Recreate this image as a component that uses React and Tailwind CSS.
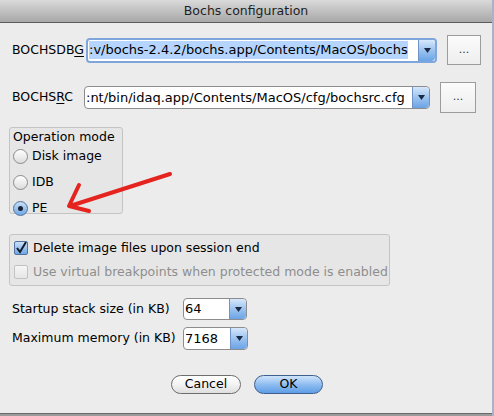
import React from 'react';

const font = { fontFamily: '"Lucida Grande", "DejaVu Sans", sans-serif' };

const Arrow = () => (
  <div className="flex h-full w-[17px] shrink-0 items-center justify-center rounded-r-[4px] border-l border-[#6f93c6] bg-gradient-to-b from-[#d6e7fb] via-[#9cc3ef] to-[#6aa3e6]">
    <svg width="7" height="5" viewBox="0 0 7 5">
      <path d="M0 0 L7 0 L3.5 5 Z" fill="#1b2a44" />
    </svg>
  </div>
);

const Combo = ({ text, width, height, focused, selected }) => (
  <div
    className={`flex shrink-0 items-stretch rounded-[4px] bg-white ${
      focused ? 'border-2 border-[#7ea6dc]' : 'border border-[#8d8d8d]'
    }`}
    style={{ width, height }}
  >
    <div className="flex flex-1 items-center overflow-hidden pl-[1px]">
      <span
        className={`whitespace-nowrap text-[13px] leading-[18px] text-black ${selected ? 'bg-[#b5d5fe]' : ''}`}
      >
        {text}
      </span>
    </div>
    <Arrow />
  </div>
);

const DotsButton = ({ width, height }) => (
  <div
    className="flex shrink-0 items-center justify-center border border-[#9c9c9c] bg-gradient-to-b from-[#fbfbfb] to-[#eeeeee] text-[11px] text-[#333]"
    style={{ width, height }}
  >
    ...
  </div>
);

const Radio = ({ label, checked }) => (
  <div className="flex h-[26px] items-center gap-[4px] pl-[3px]">
    {checked ? (
      <div className="flex h-[15px] w-[15px] items-center justify-center rounded-full border border-[#51729f] bg-gradient-to-b from-[#c9e0f8] to-[#6ea7e4]">
        <div className="h-[5px] w-[5px] rounded-full bg-[#1b2331]" />
      </div>
    ) : (
      <div className="h-[15px] w-[15px] rounded-full border border-[#8b8b8b] bg-gradient-to-b from-[#ffffff] to-[#dcdcdc]" />
    )}
    <span className="text-[12.5px] text-black">{label}</span>
  </div>
);

export default function App() {
  return (
    <div className="relative flex h-[416px] w-[494px] overflow-hidden bg-[#ececec]" style={font}>
      <div className="flex w-[492px] flex-col">
        {/* Title bar */}
        <div className="flex h-[23px] shrink-0 items-center justify-center border-b border-[#5c5c5c] bg-gradient-to-b from-[#dadada] to-[#a8a8a8] text-[12.5px] text-[#1e1e1e]">
          Bochs configuration
        </div>

        {/* BOCHSDBG */}
        <div className="mt-[12px] flex h-[30px] items-center">
          <span className="w-[86px] shrink-0 whitespace-nowrap pl-[12px] text-[12.5px] text-black">
            BOCHSDB<span className="underline underline-offset-2">G</span>
          </span>
          <Combo text=":v/bochs-2.4.2/bochs.app/Contents/MacOS/bochs" width={351} height={25} focused selected />
          <div className="ml-[10px]">
            <DotsButton width={34} height={30} />
          </div>
        </div>

        {/* BOCHSRC */}
        <div className="mt-[17px] flex h-[31px] items-center">
          <span className="w-[84px] shrink-0 whitespace-nowrap pl-[12px] text-[12.5px] text-black">
            BOCHS<span className="underline underline-offset-2">R</span>C
          </span>
          <Combo text=":nt/bin/idaq.app/Contents/MacOS/cfg/bochsrc.cfg" width={346} height={23} />
          <div className="ml-[10px]">
            <DotsButton width={36} height={31} />
          </div>
        </div>

        {/* Operation mode */}
        <div className="ml-[9px] mt-[14px] flex h-[87px] w-[114px] flex-col rounded-[3px] border border-[#c4c4c4] bg-[#e6e6e6] pt-[1px]">
          <span className="whitespace-nowrap pl-[3px] text-[12.5px] leading-[16px] text-black">Operation mode</span>
          <div className="-mt-[2px] flex flex-col">
            <Radio label="Disk image" />
            <Radio label="IDB" />
            <Radio label="PE" checked />
          </div>
        </div>

        {/* Checkbox group */}
        <div className="ml-[9px] mt-[20px] flex h-[52px] w-[381px] flex-col rounded-[3px] border border-[#c4c4c4] bg-[#e6e6e6] pl-[4px]">
          <div className="flex h-[24px] items-center gap-[5px] pt-[2px]">
            <div className="flex h-[14px] w-[14px] shrink-0 items-center justify-center rounded-[2px] border border-[#51729f] bg-gradient-to-b from-[#c9e0f8] to-[#6ea7e4]">
              <svg width="12" height="12" viewBox="0 0 12 12">
                <path d="M2 6 L5 10 L11 0" fill="none" stroke="#141c2a" strokeWidth="2" />
              </svg>
            </div>
            <span className="whitespace-nowrap text-[12.5px] text-black">Delete image files upon session end</span>
          </div>
          <div className="flex h-[26px] items-center gap-[5px]">
            <div className="h-[14px] w-[14px] shrink-0 rounded-[2px] border border-[#c2c2c2] bg-gradient-to-b from-[#f6f6f6] to-[#e6e6e6]" />
            <span className="whitespace-nowrap text-[12.5px] text-[#8e8e8e]">Use virtual breakpoints when protected mode is enabled</span>
          </div>
        </div>

        {/* Startup stack */}
        <div className="mt-[12px] flex h-[22px] items-center">
          <span className="w-[183px] shrink-0 whitespace-nowrap pl-[12px] text-[12.5px] text-black">Startup stack size (in KB)</span>
          <Combo text="64" width={64} height={22} />
        </div>
        <div className="mt-[7px] flex h-[23px] items-center">
          <span className="w-[183px] shrink-0 whitespace-nowrap pl-[12px] text-[12.5px] text-black">Maximum memory (in KB)</span>
          <Combo text="7168" width={65} height={23} />
        </div>

        {/* Buttons */}
        <div className="mt-[25px] flex justify-center gap-[13px] pl-[2px]">
          <div className="flex h-[19px] w-[70px] items-center justify-center rounded-full border border-[#6e6e6e] bg-gradient-to-b from-[#ffffff] via-[#f3f3f3] to-[#dedede] text-[12.5px] text-black">
            Cancel
          </div>
          <div className="flex h-[19px] w-[69px] items-center justify-center rounded-full border border-[#3f5f8f] bg-gradient-to-b from-[#cfe4fa] via-[#8fbdf0] to-[#5f9de6] text-[12.5px] text-black">
            OK
          </div>
        </div>

        <div className="flex-1" />
        <div className="h-[3px] shrink-0 border-t border-[#6a6a6a] bg-[#9a9a9a]" />
      </div>
      <div className="w-[2px] bg-[#a8b4c6]" />

      {/* Red annotation arrow */}
      <svg className="pointer-events-none absolute left-0 top-0" width="494" height="416">
        <g fill="none" stroke="#e5231f" strokeWidth="4" strokeLinecap="round" strokeLinejoin="round">
          <path d="M170 174 L70 206" />
          <path d="M79 185 L69 206 L89 211" />
        </g>
      </svg>
    </div>
  );
}
